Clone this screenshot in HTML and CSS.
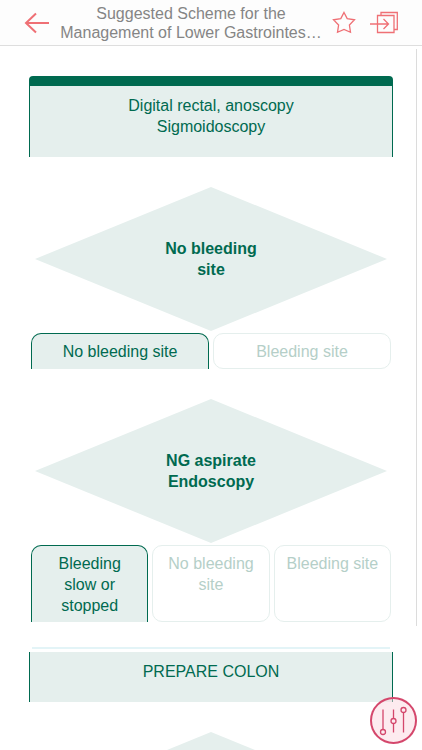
FILE: index.html
```html
<!DOCTYPE html>
<html lang="en">
<head>
    <meta charset="UTF-8">
    <meta name="viewport" content="width=device-width, initial-scale=1.0">
    <title>Lower Gastrointestinal Scheme</title>
    <link rel="stylesheet" href="styles.css">
</head>
<body>

<header class="top-bar">
    <button class="icon-btn back" aria-label="Back">
        <svg width="26" height="24" viewBox="0 0 26 24"><path d="M25 12H2M12 2.500L2 12l10 9.500"/></svg>
    </button>
    <h1 class="title">Suggested Scheme for the<br>Management of Lower Gastrointes…</h1>
    <button class="icon-btn" aria-label="Favorite">
        <svg width="24" height="24" viewBox="0 0 24 24"><path d="M12 1.500L15.200 7.600L22.500 8.800L17.400 14L18.500 21.300L12 18.500L5.500 21.300L6.600 14L1.500 8.800L8.800 7.600Z"/></svg>
    </button>
    <button class="icon-btn" aria-label="Open related">
        <svg width="32" height="24" viewBox="0 0 32 24"><path d="M11.500 4.500H28V21.500H11.500ZM4 13H22M17.500 8L22.500 13L17.500 18M15 4.500V1.500H31.300V18.500H28"/></svg>
    </button>
</header>

<main class="flow">
    <section class="box first">Digital rectal, anoscopy<br>Sigmoidoscopy</section>

    <div class="diamond">No bleeding<br>site</div>
    <div class="tabs">
        <button class="tab active">No bleeding site</button>
        <button class="tab">Bleeding site</button>
    </div>

    <div class="diamond">NG aspirate<br>Endoscopy</div>
    <div class="tabs">
        <button class="tab active">Bleeding slow or stopped</button>
        <button class="tab">No bleeding site</button>
        <button class="tab">Bleeding site</button>
    </div>

    <div class="divider"></div>
    <section class="box">PREPARE COLON</section>

    <div class="diamond"></div>
    <div class="scrollbar"></div>
</main>

<button class="settings" aria-label="Settings">
    <svg width="47" height="47" viewBox="0 0 47 47">
        <path d="M13 12.500V32.500M23.500 12.500V21.500M23.500 26.500V35.500M33.500 15.500V35.500"/>
        <circle cx="13" cy="35" r="2.500"/>
        <circle cx="23.500" cy="24" r="2.500"/>
        <circle cx="33.500" cy="13" r="2.500"/>
    </svg>
</button>

</body>
</html>
```

FILE: styles.css
```css
* {
    box-sizing: border-box;
}
body {
    margin: 0;
    height: 100vh;
    display: flex;
    flex-direction: column;
    overflow: hidden;
    font-family: "Liberation Sans", Arial, sans-serif;
    font-size: 16px;
    line-height: 21px;
    color: #006a50;
    background-color: #fff;
}
button {
    font: inherit;
    color: inherit;
    margin: 0;
    padding: 0;
    background: none;
    border: none;
    cursor: pointer;
}
svg {
    display: block;
    fill: none;
}
.top-bar {
    flex: none;
    display: flex;
    align-items: center;
    gap: 10px;
    height: 46px;
    padding: 0 24px;
    background-color: #fdfdfd;
    border-bottom: 1px solid #dedede;
}
.title {
    flex: 1;
    margin: 0;
    font-size: 16px;
    font-weight: normal;
    line-height: 19px;
    text-align: center;
    white-space: nowrap;
    color: #858585;
}
.icon-btn svg {
    stroke: #ef7075;
    stroke-width: 1.3;
}
.back svg {
    stroke-width: 2;
}
.flow {
    flex: 1;
    position: relative;
    overflow: hidden;
    padding: 30px 29px 0;
}
.box {
    padding: 9px 16px 20px;
    text-align: center;
    background-color: #e5efed;
    border: 1px solid #006a50;
    border-width: 0 1px;
}
.box.first {
    border-top-width: 10px;
    border-radius: 4px 4px 0 0;
}
.diamond {
    display: flex;
    align-items: center;
    justify-content: center;
    height: 144px;
    margin: 30px 6px 2px;
    font-weight: bold;
    text-align: center;
    background-color: #e5efed;
    clip-path: polygon(50% 0, 100% 50%, 50% 100%, 0 50%);
}
.tabs {
    display: flex;
    gap: 4px;
    padding: 0 2px;
}
.tab {
    flex: 1 1 0;
    display: flex;
    justify-content: center;
    padding: 7px 10px 6px;
    color: #b5cfc8;
    border: 1px solid #e5efed;
    border-radius: 10px;
}
.tab.active {
    color: #006a50;
    background-color: #e5efed;
    border-color: #006a50;
    border-bottom: none;
    border-radius: 10px 10px 0 0;
}
.divider {
    height: 2px;
    margin: 25px 3px 3px;
    background-color: #e3f4f7;
}
/* Scroll position indicator */
.scrollbar {
    position: absolute;
    top: 3px;
    right: 5px;
    width: 1px;
    height: 82%;
    background-color: #dcdcdc;
}
.settings {
    position: fixed;
    right: 5px;
    bottom: 6px;
    width: 47px;
    height: 47px;
    border-radius: 50%;
    background-color: rgba(252, 215, 223, 0.5);
    box-shadow: inset 0 0 0 2px #d4476c;
}
.settings svg {
    stroke: #d4476c;
    stroke-width: 1.3;
}
```
